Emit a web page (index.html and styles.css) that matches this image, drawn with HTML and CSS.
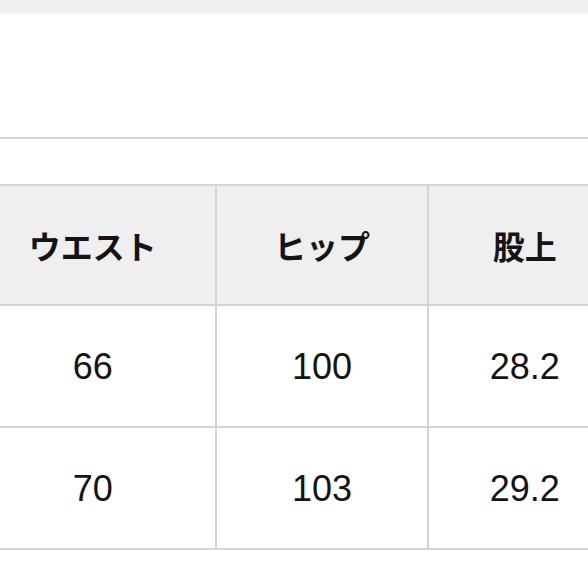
FILE: index.html
```html
<!DOCTYPE html>
<html lang="ja">
<head>
<meta charset="utf-8">
<link rel="stylesheet" href="styles.css">
</head>
<body>
<div class="page">
  <div class="topbar"></div>
  <div class="blank"></div>
  <div class="rule"></div>
  <div class="gap"></div>
  <div class="table-crop">
    <table class="size-table">
      <thead>
        <tr>
          <th>ウエスト</th>
          <th>ヒップ</th>
          <th>股上</th>
        </tr>
      </thead>
      <tbody>
        <tr>
          <td>66</td>
          <td>100</td>
          <td>28.2</td>
        </tr>
        <tr>
          <td>70</td>
          <td>103</td>
          <td>29.2</td>
        </tr>
      </tbody>
    </table>
  </div>
</div>
</body>
</html>
```
FILE: styles.css
```css
html, body {
  margin: 0;
  padding: 0;
  background: #ffffff;
}
body {
  width: 588px;
  height: 588px;
  overflow: hidden;
  font-family: "Liberation Sans", "Noto Sans CJK JP", sans-serif;
  color: #141414;
}
.page {
  display: flex;
  flex-direction: column;
  width: 588px;
  overflow: hidden;
}
.topbar {
  height: 12px;
  background: #f0f0f0;
  border-bottom: 3px solid #f6f6f6;
}
.blank {
  height: 122px;
}
.rule {
  height: 2px;
  background: #d5d5d5;
}
.gap {
  height: 45px;
}
.table-crop {
  width: 588px;
  overflow: hidden;
}
.size-table {
  margin-left: -29px;
  border-collapse: separate;
  border-spacing: 0;
  border-top: 2px solid #d4d4d4;
  table-layout: fixed;
  width: 651px;
}
.size-table th,
.size-table td {
  border-right: 2px solid #d4d4d4;
  border-bottom: 2px solid #d4d4d4;
  text-align: center;
  vertical-align: middle;
  padding: 0;
}
.size-table th:nth-child(1),
.size-table td:nth-child(1) { width: 243px; }
.size-table th:nth-child(2),
.size-table td:nth-child(2) { width: 210px; }
.size-table th:nth-child(3),
.size-table td:nth-child(3) { width: 190px; }
.size-table th {
  height: 118px;
  background: #efefef;
  font-family: "Noto Sans CJK JP", sans-serif;
  font-weight: 700;
  font-size: 32px;
}
.size-table td {
  height: 118px;
  padding-top: 2px;
  background: #ffffff;
  font-size: 36px;
  font-weight: 400;
}
```
